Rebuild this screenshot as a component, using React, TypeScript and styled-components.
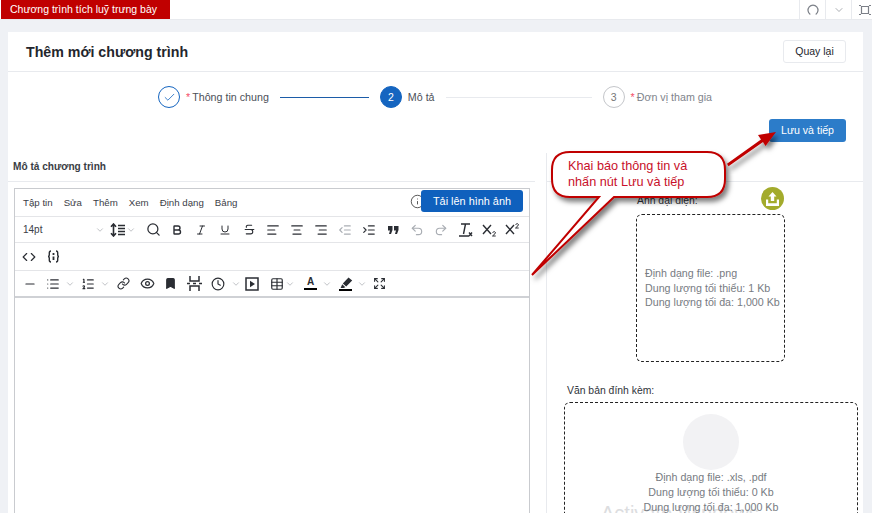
import React from "react";
import styled, { createGlobalStyle } from "styled-components";
import {
    AlignCenter, AlignLeft, AlignRight, Bold, Bookmark, Check, ChevronDown, Clock,
    Code, Expand, Eye, Indent, Info, Italic, Link, List, ListOrdered,
    Minus, Outdent, Redo2, Search, Strikethrough,
    Table, Underline, Undo2,
} from "lucide-react";

const GlobalStyle = createGlobalStyle`
    html, body { margin: 0; padding: 0; height: 100%; overflow: hidden; }
    body { background: #eff1f5; font-family: "Liberation Sans", Arial, sans-serif; }
`;

const Page = styled.div`
    position: relative;
    width: 872px;
    height: 513px;
    overflow: hidden;
    display: flex;
    flex-direction: column;
`;

const TopBar = styled.div`
    height: 20px;
    flex: none;
    background: #fff;
    display: flex;
    justify-content: space-between;
    border-bottom: 1px solid #e8eaee;
    box-sizing: border-box;
`;

const RedTab = styled.div`
    margin-left: 1px;
    width: 169px;
    height: 19px;
    background: #c00000;
    color: #fff;
    font-size: 10.5px;
    line-height: 19px;
    padding-left: 9px;
    box-sizing: border-box;
`;

const TopActions = styled.div`
    display: flex;
    margin-right: -5px;
`;

const TopAction = styled.div`
    width: 25px;
    display: flex;
    align-items: center;
    justify-content: center;
    border-left: 1px solid #e8eaee;
    color: #7c8088;
`;

const Card = styled.div`
    margin: 12px 9px 0 8px;
    flex: 1;
    background: #fff;
    display: flex;
    flex-direction: column;
    min-height: 0;
`;

const CardHeader = styled.div`
    height: 40px;
    flex: none;
    box-sizing: border-box;
    border-bottom: 1px solid #e8eaee;
    display: flex;
    align-items: center;
    justify-content: space-between;
    padding: 0 17px 0 18px;
`;

const CardTitle = styled.div`
    font-size: 14.2px;
    font-weight: 700;
    color: #23262d;
`;

const BackButton = styled.div`
    width: 63px;
    height: 23px;
    box-sizing: border-box;
    border: 1px solid #e8eaee;
    border-radius: 3px;
    font-size: 10.5px;
    line-height: 21px;
    text-align: center;
    color: #23262d;
`;

const Stepper = styled.div`
    height: 47px;
    flex: none;
    box-sizing: border-box;
    display: flex;
    align-items: center;
    padding: 3px 0 0 150px;
`;

const StepCircle = styled.div<{ $state: "done" | "active" | "todo" }>`
    width: 22px;
    height: 22px;
    flex: none;
    box-sizing: border-box;
    border-radius: 50%;
    display: flex;
    align-items: center;
    justify-content: center;
    font-size: 10.5px;
    border: 1px solid ${({ $state }) => ($state === "todo" ? "#c4c6ca" : "#1565c0")};
    background: ${({ $state }) => ($state === "active" ? "#1565c0" : "#fff")};
    color: ${({ $state }) => ($state === "active" ? "#fff" : $state === "done" ? "#1565c0" : "#777")};
`;

const StepLabel = styled.div<{ $muted?: boolean }>`
    margin-left: 6px;
    font-size: 10.7px;
    white-space: nowrap;
    color: ${({ $muted }) => ($muted ? "#80848c" : "#4c5058")};
`;

const Star = styled.span`
    color: #f4506a;
    margin-right: 2px;
`;

const StepLine = styled.div<{ $active?: boolean; $w: number }>`
    width: ${({ $w }) => $w}px;
    height: 1px;
    margin: 0 11px;
    background: ${({ $active }) => ($active ? "#1c5ca8" : "#e8eaee")};
`;

const SaveRow = styled.div`
    height: 34px;
    flex: none;
    display: flex;
    justify-content: flex-end;
    padding-right: 17px;
`;

const SaveButton = styled.div`
    width: 77px;
    height: 23px;
    border-radius: 3px;
    background: #2c7cc9;
    color: #fff;
    font-size: 10.6px;
    line-height: 23px;
    text-align: center;
`;

const Body = styled.div`
    flex: 1;
    display: flex;
    min-height: 0;
`;

const LeftCol = styled.div`
    width: 538px;
    flex: none;
    display: flex;
    flex-direction: column;
    padding-top: 7px;
    box-sizing: border-box;
`;

const FieldTitle = styled.div`
    margin-left: 5px;
    height: 21px;
    font-size: 10.1px;
    font-weight: 700;
    line-height: 14px;
    color: #3a3d44;
`;

const SplitRule = styled.div`
    height: 1px;
    flex: none;
    width: 527px;
    background: #e8eaee;
    margin-bottom: 6px;
`;

const Editor = styled.div`
    margin-left: 6px;
    width: 516px;
    flex: 1;
    box-sizing: border-box;
    border: 1px solid #c9cbcf;
    border-bottom: none;
    display: flex;
    flex-direction: column;
`;

const EditorRow = styled.div<{ $h: number; $strong?: boolean }>`
    position: relative;
    height: ${({ $h }) => $h}px;
    flex: none;
    box-sizing: border-box;
    display: flex;
    align-items: center;
    border-bottom: ${({ $strong }) => ($strong ? "2px solid #cfd1d5" : "1px solid #e4e5e8")};
    color: #2a2d33;
`;

const MenuBar = styled(EditorRow)`
    padding-left: 8px;
    gap: 11px;
`;

const MenuItem = styled.span`
    font-size: 9.7px;
    color: #3c4047;
`;

const UploadButton = styled.div`
    position: absolute;
    right: 6px;
    top: 1px;
    width: 102px;
    height: 22px;
    border-radius: 3px;
    background: #0f60bd;
    color: #fff;
    font-size: 10.9px;
    line-height: 22px;
    text-align: center;
`;

const InfoMark = styled.div`
    position: absolute;
    right: 104px;
    top: 5px;
    display: flex;
    color: #222;
`;

const FontSize = styled.span`
    width: 72px;
    margin-left: 8px;
    font-size: 10px;
    color: #3c4047;
`;

const Tool = styled.span<{ $w?: number; $dim?: boolean; $gap?: number }>`
    width: ${({ $w }) => $w ?? 24}px;
    flex: none;
    display: inline-flex;
    align-items: center;
    justify-content: center;
    gap: ${({ $gap }) => $gap ?? 1}px;
    color: ${({ $dim }) => ($dim ? "#a9adb3" : "#2a2d33")};
`;

const Caret = styled(ChevronDown).attrs({ size: 10, strokeWidth: 1.5 })`
    color: #9a9da3;
    flex: none;
`;

const ColorBar = styled.span`
    display: inline-block;
    box-sizing: border-box;
    width: 13px;
    height: 13px;
    font-size: 10px;
    line-height: 10px;
    font-weight: 700;
    text-align: center;
    border-bottom: 2px solid #000;
`;

const RightCol = styled.div`
    flex: 1;
    display: flex;
    flex-direction: column;
    border-left: 1px solid #e8eaee;
    min-width: 0;
`;

const RightGap = styled.div`
    height: 28px;
    flex: none;
`;

const RightRule = styled.div`
    height: 1px;
    flex: none;
    background: #e8eaee;
`;

const AvatarBlock = styled.div`
    position: relative;
    margin-left: 89px;
    width: 149px;
    padding-top: 13px;
`;

const Label = styled.div<{ $indent?: number; $after?: number }>`
    font-size: 10.4px;
    line-height: 12px;
    color: #30333a;
    margin: 0 0 ${({ $after }) => $after ?? 7}px ${({ $indent }) => $indent ?? 1}px;
`;

const UploadBadge = styled.div`
    position: absolute;
    right: 1px;
    top: 5px;
    width: 23px;
    height: 23px;
    border-radius: 50%;
    background: #a3ab2c;
    display: flex;
    align-items: center;
    justify-content: center;
`;

const DashedBox = styled.div<{ $h: number; $w: number }>`
    width: ${({ $w }) => $w}px;
    height: ${({ $h }) => $h}px;
    box-sizing: border-box;
    border: 1px dashed #222;
    border-radius: 6px;
`;

const AvatarDrop = styled(DashedBox)`
    display: flex;
    flex-direction: column;
    justify-content: center;
    padding-left: 8px;
`;

const DropText = styled.div`
    font-size: 10.7px;
    line-height: 14.5px;
    color: #777b82;
    white-space: nowrap;
`;

const FileBlock = styled.div`
    margin: 23px 0 0 17px;
`;

const FileDrop = styled(DashedBox)`
    position: relative;
    display: flex;
    flex-direction: column;
    align-items: center;
    padding-top: 11px;
`;

const Placeholder = styled.div`
    width: 56px;
    height: 56px;
    flex: none;
    border-radius: 50%;
    background: #f2f2f4;
`;

const Watermark = styled.div`
    position: absolute;
    left: 36px;
    top: 99px;
    font-size: 20px;
    color: #dcdde0;
    white-space: nowrap;
`;

const CenterText = styled(DropText)`
    position: relative;
    line-height: 15px;
    text-align: center;
`;

const Overlay = styled.svg`
    position: absolute;
    left: 0;
    top: 0;
    pointer-events: none;
`;

const CalloutText = styled.div`
    position: absolute;
    left: 568px;
    top: 158px;
    font-size: 12.7px;
    line-height: 16px;
    color: #c8102a;
    white-space: nowrap;
`;

const LineHeightIcon = () => (
    <svg width="15" height="14" viewBox="0 0 15 14" fill="none" stroke="currentColor" strokeWidth="1.6">
        <path d="M3.5 1v12M1 3.8l2.5-2.8 2.5 2.8M1 10.2l2.5 2.8 2.5-2.8M8 2.5h7M8 5.5h7M8 8.5h7M8 11.5h7" />
    </svg>
);

const PageBreakIcon = () => (
    <svg width="15" height="15" viewBox="0 0 15 15" fill="none" stroke="currentColor" strokeWidth="1.5">
        <path d="M3 0v5h9V0M3 15v-5h9v5M0 7.5h3M6 7.5h3M12 7.5h3" />
    </svg>
);

const QuoteIcon = () => (
    <svg width="11" height="8" viewBox="0 0 11 8" fill="currentColor">
        <path d="M0 0h4.5v4L3 8H1l1-3.5H0zM6 0h4.5v4L9 8H7l1-3.5H6z" />
    </svg>
);

const ClearFormatIcon = () => (
    <svg width="15" height="15" viewBox="0 0 15 15" fill="none" stroke="currentColor" strokeWidth="1.4">
        <path d="M3 2h9M7.5 2L5.5 12M1 14h10M11 10.5l3 3.5M14 10.5L11 14" />
    </svg>
);

const SubIcon = ({ up }: { up?: boolean }) => (
    <svg width="15" height="15" viewBox="0 0 15 15" fill="none" stroke="currentColor" strokeWidth="1.4">
        <path d="M1 3l8 9M9 3l-8 9" />
        <path d={up ? "M10.5 2.5q2-1.8 3 0 .2 1-3 3.5h3.2" : "M10.5 10.5q2-1.8 3 0 .2 1-3 3.5h3.2"} strokeWidth="1" />
    </svg>
);

const VarIcon = () => (
    <svg width="13" height="13" viewBox="0 0 13 13" fill="none" stroke="currentColor" strokeWidth="1.4">
        <path d="M4 1Q2.3 1 2.3 3v2Q2.3 6.5 1 6.5 2.3 6.5 2.3 8v2Q2.3 12 4 12M9 1q1.7 0 1.7 2v2Q10.7 6.5 12 6.5 10.7 6.5 10.7 8v2Q10.7 12 9 12" />
        <path d="M6.5 3v2M6.5 6.5v3.5" strokeWidth="1.8" />
    </svg>
);

const MediaIcon = () => (
    <svg width="14" height="14" viewBox="0 0 14 14" fill="none" stroke="currentColor" strokeWidth="1.5">
        <rect x="1" y="1" width="12" height="12" />
        <path d="M5 3.8L10 7 5 10.2z" fill="currentColor" stroke="none" />
    </svg>
);

const PenIcon = () => (
    <svg width="14" height="14" viewBox="0 0 14 14" fill="currentColor">
        <path d="M9.5 0.5L13.2 3.6 7.2 9.6 3.8 6.4zM3.2 7.2L6.4 10.2 4.4 11H1.6z" />
        <path d="M0 12h13v2H0z" fill="#000" />
    </svg>
);

const ArcIcon = () => (
    <svg width="12" height="12" viewBox="0 0 12 12" fill="none" stroke="currentColor" strokeWidth="1.2">
        <path d="M3.3 10.4A5 5 0 1 1 8.7 10.4" />
    </svg>
);

const FrameIcon = () => (
    <svg width="12" height="12" viewBox="0 0 12 12" fill="none" stroke="currentColor" strokeWidth="1.2">
        <path d="M2.5 2.5h7v7h-7zM0 1.5h2M10 1.5h2M0 10.5h2M10 10.5h2" />
    </svg>
);

export default function App() {
    return (
        <Page>
            <GlobalStyle />
            <TopBar>
                <RedTab>Chương trình tích luỹ trưng bày</RedTab>
                <TopActions>
                    <TopAction><ArcIcon /></TopAction>
                    <TopAction><ChevronDown size={12} strokeWidth={1.3} /></TopAction>
                    <TopAction><FrameIcon /></TopAction>
                </TopActions>
            </TopBar>
            <Card>
                <CardHeader>
                    <CardTitle>Thêm mới chương trình</CardTitle>
                    <BackButton>Quay lại</BackButton>
                </CardHeader>
                <Stepper>
                    <StepCircle $state="done"><Check size={13} strokeWidth={1.5} /></StepCircle>
                    <StepLabel><Star>*</Star>Thông tin chung</StepLabel>
                    <StepLine $active $w={89} />
                    <StepCircle $state="active">2</StepCircle>
                    <StepLabel>Mô tả</StepLabel>
                    <StepLine $w={146} />
                    <StepCircle $state="todo">3</StepCircle>
                    <StepLabel $muted><Star>*</Star>Đơn vị tham gia</StepLabel>
                </Stepper>
                <SaveRow><SaveButton>Lưu và tiếp</SaveButton></SaveRow>
                <Body>
                    <LeftCol>
                        <FieldTitle>Mô tả chương trình</FieldTitle>
                        <SplitRule />
                        <Editor>
                            <MenuBar $h={28}>
                                <MenuItem>Tập tin</MenuItem>
                                <MenuItem>Sửa</MenuItem>
                                <MenuItem>Thêm</MenuItem>
                                <MenuItem>Xem</MenuItem>
                                <MenuItem>Định dạng</MenuItem>
                                <MenuItem>Bảng</MenuItem>
                                <InfoMark><Info size={15} strokeWidth={1.2} /></InfoMark>
                                <UploadButton>Tải lên hình ảnh</UploadButton>
                            </MenuBar>
                            <EditorRow $h={26}>
                                <FontSize>14pt</FontSize>
                                <Caret />
                                <Tool $w={36}><LineHeightIcon /><Caret /></Tool>
                                <Tool><Search size={15} strokeWidth={2} /></Tool>
                                <Tool><Bold size={12} strokeWidth={2.8} /></Tool>
                                <Tool><Italic size={12} /></Tool>
                                <Tool><Underline size={12} /></Tool>
                                <Tool><Strikethrough size={13} /></Tool>
                                <Tool><AlignLeft size={14} /></Tool>
                                <Tool><AlignCenter size={14} /></Tool>
                                <Tool><AlignRight size={14} /></Tool>
                                <Tool $dim><Outdent size={14} /></Tool>
                                <Tool><Indent size={14} /></Tool>
                                <Tool><QuoteIcon /></Tool>
                                <Tool $dim><Undo2 size={14} /></Tool>
                                <Tool $dim><Redo2 size={14} /></Tool>
                                <Tool><ClearFormatIcon /></Tool>
                                <Tool><SubIcon /></Tool>
                                <Tool $w={22}><SubIcon up /></Tool>
                            </EditorRow>
                            <EditorRow $h={28}>
                                <Tool $w={27}><Code size={14} /></Tool>
                                <Tool $w={22}><VarIcon /></Tool>
                            </EditorRow>
                            <EditorRow $h={27} $strong>
                                <Tool $w={30}><Minus size={14} /></Tool>
                                <Tool $w={31} $gap={5}><List size={14} /><Caret /></Tool>
                                <Tool $w={39} $gap={5}><ListOrdered size={14} /><Caret /></Tool>
                                <Tool $w={16}><Link size={13} strokeWidth={2} /></Tool>
                                <Tool $w={32}><Eye size={15} strokeWidth={2} /></Tool>
                                <Tool $w={14}><Bookmark size={13} fill="currentColor" /></Tool>
                                <Tool $w={34}><PageBreakIcon /></Tool>
                                <Tool $w={30} $gap={6}><Clock size={14} strokeWidth={2} /><Caret /></Tool>
                                <Tool $w={22}><MediaIcon /></Tool>
                                <Tool $w={39}><Table size={14} strokeWidth={2} /><Caret /></Tool>
                                <Tool $w={32} $gap={5}><ColorBar>A</ColorBar><Caret /></Tool>
                                <Tool $w={38} $gap={4}><PenIcon /><Caret /></Tool>
                                <Tool $w={14}><Expand size={13} /></Tool>
                            </EditorRow>
                        </Editor>
                    </LeftCol>
                    <RightCol>
                        <RightGap />
                        <RightRule />
                        <AvatarBlock>
                            <Label>Ảnh đại diện:</Label>
                            <UploadBadge>
                                <svg width="15" height="14" viewBox="0 0 15 14" fill="#fff">
                                    <path d="M7.5 0l4 4.5H9.2V9H5.8V4.5H3.5zM1 7.5h2.2v3.7h8.6V7.5H14V14H1z" />
                                </svg>
                            </UploadBadge>
                            <AvatarDrop $w={149} $h={148}>
                                <DropText>Định dạng file: .png</DropText>
                                <DropText>Dung lượng tối thiểu: 1 Kb</DropText>
                                <DropText>Dung lượng tối đa: 1,000 Kb</DropText>
                            </AvatarDrop>
                        </AvatarBlock>
                        <FileBlock>
                            <Label $indent={3} $after={5}>Văn bản đính kèm:</Label>
                            <FileDrop $w={294} $h={180}>
                                <Placeholder />
                                <Watermark>Activate Windows</Watermark>
                                <CenterText>Định dạng file: .xls, .pdf</CenterText>
                                <CenterText>Dung lượng tối thiểu: 0 Kb</CenterText>
                                <CenterText>Dung lượng tối đa: 1,000 Kb</CenterText>
                            </FileDrop>
                        </FileBlock>
                    </RightCol>
                </Body>
            </Card>
            <Overlay width="872" height="513" viewBox="0 0 872 513">
                <defs>
                    <filter id="shade" x="-20%" y="-20%" width="140%" height="140%">
                        <feDropShadow dx="3" dy="4" stdDeviation="2.5" floodColor="#000" floodOpacity="0.5" />
                    </filter>
                </defs>
                <path
                    d="M570 152H707Q725 152 725 170V179Q725 197 707 197H614L532 275L599 197H570Q552 197 552 179V170Q552 152 570 152Z"
                    fill="#fff"
                    stroke="#c00000"
                    strokeWidth="2"
                    filter="url(#shade)"
                />
                <path
                    d="M727 163.8L761 139.5L758 135L776 132L765.5 146L763 142L728.5 166.2Z"
                    fill="#c00000"
                    filter="url(#shade)"
                />
            </Overlay>
            <CalloutText>Khai báo thông tin và<br />nhấn nút Lưu và tiếp</CalloutText>
        </Page>
    );
}
